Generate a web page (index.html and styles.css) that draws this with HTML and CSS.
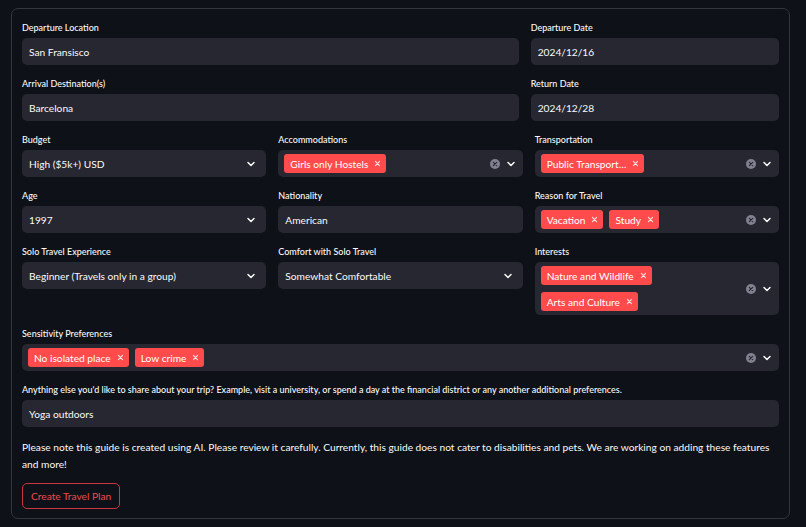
FILE: index.html
```html
<!DOCTYPE html>
<html>
<head>
<meta charset="utf-8">
<link rel="stylesheet" href="styles.css">
</head>
<body>
<svg width="0" height="0" style="position:absolute">
  <defs>
    <symbol id="chev" viewBox="0 0 10 10"><polyline points="2,3.5 5,6.5 8,3.5" fill="none" stroke="#fafafa" stroke-width="1.5" stroke-linecap="round" stroke-linejoin="round"/></symbol>
    <symbol id="clear" viewBox="0 0 10 10"><circle cx="5" cy="5" r="5" fill="#808290"/><path d="M3.3 3.3 L6.7 6.7 M6.7 3.3 L3.3 6.7" stroke="#262730" stroke-width="1.2" stroke-linecap="round"/></symbol>
    <symbol id="x" viewBox="0 0 10 10"><path d="M2 2 L8 8 M8 2 L2 8" stroke="#fafafa" stroke-width="1.5" stroke-linecap="round"/></symbol>
  </defs>
</svg>
<form class="form">
  <div class="grid two">
    <div class="field"><label class="lbl">Departure Location</label><div class="input">San Fransisco</div></div>
    <div class="field"><label class="lbl">Departure Date</label><div class="input">2024/12/16</div></div>
    <div class="field"><label class="lbl">Arrival Destination(s)</label><div class="input">Barcelona</div></div>
    <div class="field"><label class="lbl">Return Date</label><div class="input">2024/12/28</div></div>
  </div>
  <div class="grid three">
    <div class="field"><label class="lbl">Budget</label>
      <div class="input select"><span class="val">High ($5k+) USD</span><svg class="chev"><use href="#chev"/></svg></div></div>
    <div class="field"><label class="lbl">Accommodations</label>
      <div class="input multi"><div class="tags"><span class="tag">Girls only Hostels<svg class="tx"><use href="#x"/></svg></span></div><svg class="clr"><use href="#clear"/></svg><svg class="chev"><use href="#chev"/></svg></div></div>
    <div class="field"><label class="lbl">Transportation</label>
      <div class="input multi"><div class="tags"><span class="tag">Public Transport…<svg class="tx"><use href="#x"/></svg></span></div><svg class="clr"><use href="#clear"/></svg><svg class="chev"><use href="#chev"/></svg></div></div>

    <div class="field"><label class="lbl">Age</label>
      <div class="input select"><span class="val">1997</span><svg class="chev"><use href="#chev"/></svg></div></div>
    <div class="field"><label class="lbl">Nationality</label><div class="input">American</div></div>
    <div class="field"><label class="lbl">Reason for Travel</label>
      <div class="input multi"><div class="tags"><span class="tag">Vacation<svg class="tx"><use href="#x"/></svg></span><span class="tag">Study<svg class="tx"><use href="#x"/></svg></span></div><svg class="clr"><use href="#clear"/></svg><svg class="chev"><use href="#chev"/></svg></div></div>

    <div class="field"><label class="lbl">Solo Travel Experience</label>
      <div class="input select"><span class="val">Beginner (Travels only in a group)</span><svg class="chev"><use href="#chev"/></svg></div></div>
    <div class="field"><label class="lbl">Comfort with Solo Travel</label>
      <div class="input select"><span class="val">Somewhat Comfortable</span><svg class="chev"><use href="#chev"/></svg></div></div>
    <div class="field"><label class="lbl">Interests</label>
      <div class="input multi"><div class="tags"><span class="tag">Nature and Wildlife<svg class="tx"><use href="#x"/></svg></span><span class="tag">Arts and Culture<svg class="tx"><use href="#x"/></svg></span></div><svg class="clr"><use href="#clear"/></svg><svg class="chev"><use href="#chev"/></svg></div></div>
  </div>
  <div class="field"><label class="lbl">Sensitivity Preferences</label>
    <div class="input multi"><div class="tags"><span class="tag">No isolated place<svg class="tx"><use href="#x"/></svg></span><span class="tag">Low crime<svg class="tx"><use href="#x"/></svg></span></div><svg class="clr"><use href="#clear"/></svg><svg class="chev"><use href="#chev"/></svg></div></div>
  <div class="field"><label class="lbl">Anything else you'd like to share about your trip? Example, visit a university, or spend a day at the financial district or any another additional preferences.</label>
    <div class="input">Yoga outdoors</div></div>
  <p class="note">Please note this guide is created using AI. Please review it carefully. Currently, this guide does not cater to disabilities and pets. We are working on adding these features and more!</p>
  <div><button type="button" class="btn">Create Travel Plan</button></div>
</form>
</body>
</html>
```

FILE: styles.css
```css
html, body {
  background: #0e1117;
}
body {
  margin: 8px 16px 0 11px;
  font-family: Lato, "Noto Sans", sans-serif;
  color: #fafafa;
}
.form {
  border: 1px solid #35363d;
  border-radius: 7px;
  padding: 12px 10px 9px 10px;
  display: flex;
  flex-direction: column;
  gap: 12px;
  width: 757px;
}
.grid {
  display: grid;
  column-gap: 12px;
  row-gap: 12px;
}
.two { grid-template-columns: 2fr 1fr; }
.three { grid-template-columns: 1fr 1fr 1fr; }
.field {
  display: flex;
  flex-direction: column;
  min-width: 0;
}
.lbl {
  font-size: 9px;
  line-height: 14px;
  height: 14px;
  margin-bottom: 3px;
  white-space: nowrap;
  font-weight: 500;
}
.input {
  background: #262730;
  border-radius: 5px;
  min-height: 27px;
  box-sizing: border-box;
  padding: 0 7px;
  display: flex;
  align-items: center;
  font-size: 10.2px;
  color: #fafafa;
}
.select .val { flex: 1; }
.multi { padding: 0 6px; }
.tags {
  flex: 1;
  display: flex;
  flex-wrap: wrap;
  column-gap: 6px;
  row-gap: 7px;
  padding: 4px 0;
  align-items: flex-start;
}
.tag {
  background: #ff4b4b;
  color: #fff;
  height: 19px;
  border-radius: 3px;
  padding: 0 5px 0 6px;
  display: inline-flex;
  align-items: center;
  font-size: 10.2px;
  white-space: nowrap;
}
.tx { width: 7px; height: 7px; margin-left: 6px; opacity: .9; }
.clr { width: 10px; height: 10px; margin-right: 6px; flex: none; }
.chev { width: 10px; height: 10px; flex: none; margin-right: 1px; }
.select .chev { margin-right: 3px; }
.note {
  margin: 0;
  font-size: 10.2px;
  line-height: 17px;
}
.btn {
  background: transparent;
  border: 1px solid #c9373e;
  color: #ef4950;
  border-radius: 5px;
  height: 26px;
  padding: 0 8px;
  font-family: inherit;
  font-size: 10.2px;
  margin-top: -2px;
  display: block;
}
```
